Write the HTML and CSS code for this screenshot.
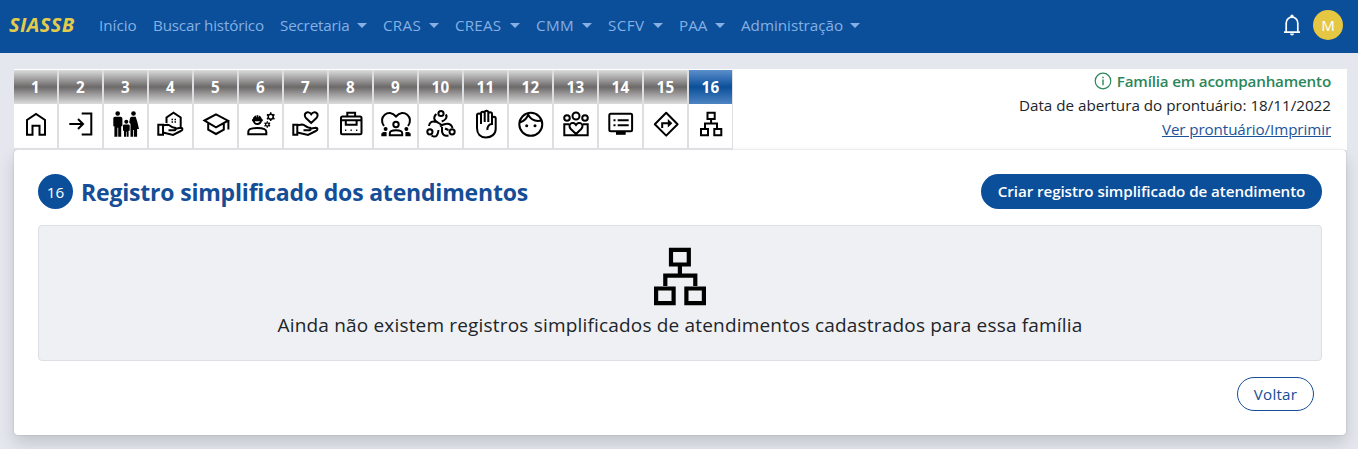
FILE: index.html
```html
<!DOCTYPE html>
<html lang="pt-BR">
<head>
<meta charset="utf-8">
<title>SIASSB</title>
<link rel="stylesheet" href="styles.css">
</head>
<body>
<header class="navbar">
  <a class="brand">SIASSB</a>
  <nav class="menu">
    <a class="item inicio"><span>Início</span></a>
    <a class="item buscar"><span>Buscar histórico</span></a>
    <a class="item secretaria"><span>Secretaria</span><i class="caret"></i></a>
    <a class="item cras"><span>CRAS</span><i class="caret"></i></a>
    <a class="item creas"><span>CREAS</span><i class="caret"></i></a>
    <a class="item cmm"><span>CMM</span><i class="caret"></i></a>
    <a class="item scfv"><span>SCFV</span><i class="caret"></i></a>
    <a class="item paa"><span>PAA</span><i class="caret"></i></a>
    <a class="item admin"><span>Administração</span><i class="caret"></i></a>
  </nav>
  <svg class="bell" viewBox="0 0 18 22"><path d="M1 18.200h16M3.200 18V9a5.800 5.800 0 0 1 11.600 0v9" fill="none" stroke="currentColor" stroke-width="1.700"/><path d="M9 .5a1.600 1.600 0 0 1 1.600 1.600v1.500H7.400V2.100A1.600 1.600 0 0 1 9 .5zM7 19.600h4a2 2 0 0 1-4 0z" fill="currentColor"/></svg>
  <span class="avatar">M</span>
</header>
<main class="page">
  <section class="top">
    <div class="tabs">
      <a class="tab"><b>1</b><svg viewBox="0 0 43 44"><path d="M13 30.700V16l9-6 9 6v14.700h-5.500v-9h-7v9z"/></svg></a>
      <a class="tab"><b>2</b><svg viewBox="0 0 43 44"><path d="M10.300 20h13.500M19 15l5 5-5 5M22.700 9.500h9.600v21h-9.600"/></svg></a>
      <a class="tab"><b>3</b><svg viewBox="0 0 43 44"><g class="solid"><circle cx="13.700" cy="9.500" r="2.300"/><path d="M10.800 12.700h5.800a1.800 1.800 0 0 1 1.800 1.800v7.800h-1.200v10.400h-3v-9h-.8v9h-3V22.300H9.300v-8a1.600 1.600 0 0 1 1.500-1.600z"/><circle cx="22.300" cy="17.700" r="2"/><path d="M20.300 20.400h4a1.400 1.400 0 0 1 1.400 1.400v5h-1.100v5.900h-2v-5h-.6v5h-2v-6h-1v-5a1.300 1.300 0 0 1 1.300-1.300z"/><circle cx="29.500" cy="9.500" r="2.300"/><path d="M27.700 12.700h4l1.600 5L35 25h-1.900v7.700H30V26h-.8v6.700h-2.700v-13l-1.300-1 .8-4.500a1.700 1.700 0 0 1 1.700-1.500z"/></g></svg></a>
      <a class="tab"><b>4</b><svg viewBox="0 0 43 44"><path d="M9.300 20.800h4.700v10H9.300zM14 21.300l4.500-.5c3 0 3.500 2.700 6 2.700 3 0 3 2.800 0 2.800h-5M25.500 25l6-1.200c2.500 0 2.500 2.500.3 3.200L24 31l-10-2.500M17.500 19v-5.500l7-4.800 7.200 4.800V23"/><path d="M22.500 15.500h1.500M25.500 15.500H27M22.500 18h1.500M25.500 18H27" stroke-width="1.500"/></svg></a>
      <a class="tab"><b>5</b><svg viewBox="0 0 43 44"><path d="M10.500 16.500L22 10.300l12 6.400-12 6.600zM14.200 19v6.700l7.800 4.300 7.800-4.300V19M34.400 17v8.500"/></svg></a>
      <a class="tab"><b>6</b><svg viewBox="0 0 43 44"><path d="M9.300 30.300v-2.500c0-5 18-5 18 0v2.500zM14.800 16.500a3.600 3.600 0 0 0 7.200 0"/><path class="solid" d="M13 17.200v-1.900h.7c.3-2.300 1.800-3.500 3.300-3.800v1.800h.5v-2h1.700v2h.5v-1.800c1.600.5 3 1.700 3.200 3.800h.9v1.900z"/><circle cx="31.700" cy="12.700" r="2.500" stroke-width="1.500"/><path d="M31.700 8.300v2M31.700 15v2M27.900 10.500l1.700 1M33.800 14l1.700 1M27.900 15l1.700-1M33.800 11.500l1.700-1" stroke-width="1.500"/><circle cx="28.300" cy="20.500" r="1.700" stroke-width="1.300"/><path d="M28.300 17.200v1.600M28.300 22.200v1.600M25.500 18.900l1.300.8M29.800 21.300l1.300.8M25.500 22.100l1.300-.8M29.800 19.700l1.300-.8" stroke-width="1.300"/></svg></a>
      <a class="tab"><b>7</b><svg viewBox="0 0 43 44"><path d="M9.300 20.800h4v10h-4zM13.500 21.300l4.500-.7c3 0 4 2.700 6.500 2.900 3 0 3 2.800 0 2.800h-5M26 24.800l5.500-1c2.500 0 2.500 2.500.3 3.200L24 31l-10.500-2.500M27.200 19l-5-4.700c-4.200-4.600 2-8.500 5-4 3-4.500 9.200-.6 5 4z"/></svg></a>
      <a class="tab"><b>8</b><svg viewBox="0 0 43 44"><rect x="12" y="12.500" width="20.500" height="17.800" rx="1.500"/><path d="M18.300 12V8.700h7.800V12M12 16.300h20M16.800 16.500v4.200h10.800v-4.200"/><path d="M16 26.300h1.300M21.500 26.300h1.300M27 26.300h1.300" stroke-width="1.400"/></svg></a>
      <a class="tab"><b>9</b><svg viewBox="0 0 43 44"><path d="M10 22C3.500 13.500 14.500 3.500 22 12.500c7.500-9 18.500 1 12 9.500"/><circle cx="22" cy="20.500" r="2.700"/><path d="M15.800 31.200v-2c0-3.800 12.400-3.800 12.400 0v2z"/><g class="solid"><circle cx="11.600" cy="25" r="2"/><circle cx="32.400" cy="25" r="2"/><path d="M7.300 32.300v-2.400c.5-1.700 2.500-2 5.300-1.700v4.100zM36.700 32.300v-2.400c-.5-1.700-2.500-2-5.300-1.700v4.100z"/></g></svg></a>
      <a class="tab"><b>10</b><svg viewBox="0 0 43 44"><circle cx="22" cy="9.500" r="2.600"/><circle cx="10.900" cy="27.800" r="2.600"/><circle cx="33.100" cy="27.800" r="2.600"/><path d="M17.300 10c-4 4-1.500 7 1.500 8.500l4 2.500M26.700 10.500c2.500 3-1 6-4 7M10 22c.3-4 4-5.500 7-3.800M12.500 31.500c5 3 6.500-1 7-5.500M21 22.500c4-3.500 11-4.500 12.500 1.500M29.500 31.500c-4 1-7-1-6.500-6.500v-2M26 24.500l3.500 1.500"/></svg></a>
      <a class="tab"><b>11</b><svg viewBox="0 0 43 44"><path d="M17 20V11.300c0-2.500-4-2.500-4 0V24c0 6 3.500 9.500 9 9.500s9.700-3.500 9.700-8.500V14.500c0-2.500-3.700-2.500-3.700 0V20c-3 0-5 3-4.500 6M17 19V9.500c0-2.500 3.700-2.500 3.700 0V18M20.700 18V8.500c0-2.500 3.600-2.500 3.600 0V18M24.300 10c0-2.500 3.700-2.500 3.700 0v9"/></svg></a>
      <a class="tab"><b>12</b><svg viewBox="0 0 43 44"><circle cx="21.800" cy="20.300" r="11.500"/><path d="M10.500 18.500c5-1.500 8-4.500 9-9.300M19 10.500c3 5.500 8 7.200 13.500 6"/><g class="solid"><circle cx="17.700" cy="21.800" r="1.500"/><circle cx="26" cy="21.800" r="1.500"/></g></svg></a>
      <a class="tab"><b>13</b><svg viewBox="0 0 43 44"><circle cx="13" cy="14" r="2.800"/><circle cx="22" cy="12" r="3.500"/><circle cx="31" cy="14" r="2.800"/><path d="M15 20.300h-4.700v11h23.400v-11H29M22 30l-5.200-5c-4-4.700 2.200-8.700 5.200-4 3-4.700 9.200-.7 5.200 4z"/></svg></a>
      <a class="tab"><b>14</b><svg viewBox="0 0 43 44"><rect x="10.300" y="9.700" width="22.800" height="17.600" rx="1.500"/><path d="M14.500 16.300h2M18.700 16.300h11M14.500 21.300h2M18.700 21.300h11"/><path class="solid" d="M17 27.500h9.700v3.300H17z"/></svg></a>
      <a class="tab"><b>15</b><svg viewBox="0 0 43 44"><path d="M22.200 8.800L33.600 20.200 22.200 31.600 10.800 20.200z" stroke-linejoin="round"/><path d="M18.200 24v-4.800h6.500"/><path class="solid" d="M23.800 15l4.500 4.200-4.500 4.200z"/></svg></a>
      <a class="tab active"><b>16</b><svg viewBox="0 0 43 44"><path d="M18.500 8.700h7.200v6.200h-7.200zM22.100 15v4.500M16 24.500v-5h12v5M12 25h7v6.300h-7zM25.300 25h7v6.300h-7z"/></svg></a>
    </div>
    <div class="status">
      <div class="follow"><svg viewBox="0 0 18 18"><circle cx="9" cy="9" r="7.800" fill="none" stroke="currentColor" stroke-width="1.200"/><path d="M8.300 4.800h1.400v1.500H8.300zM8.300 7.500h1.400v5.800H8.300z" fill="currentColor"/></svg><strong>Família em acompanhamento</strong></div>
      <div class="opened">Data de abertura do prontuário: 18/11/2022</div>
      <a class="print">Ver prontuário/Imprimir</a>
    </div>
  </section>
  <section class="card">
    <div class="heading">
      <span class="number">16</span>
      <h1>Registro simplificado dos atendimentos</h1>
      <button class="create"><span>Criar registro simplificado de atendimento</span></button>
    </div>
    <div class="empty">
      <svg viewBox="0 0 54 60"><path d="M18 2.800h17.800v14.700H18zM26.900 17.500v11M12.300 39V28.700h30V39M3.100 41.500h17.500v14.700H3.100zM33.400 41.500h17.500v14.700H33.400z" fill="none" stroke="#000" stroke-width="4.200"/></svg>
      <p>Ainda não existem registros simplificados de atendimentos cadastrados para essa família</p>
    </div>
    <div class="actions"><button class="back">Voltar</button></div>
  </section>
</main>
</body>
</html>
```
FILE: styles.css
```css
* { box-sizing: border-box; }
body {
  margin: 0;
  height: 449px;
  overflow: hidden;
  background: #e4e8ee;
  color: #212529;
  font: 15.2px/24px "Open Sans", "Noto Sans", sans-serif;
  white-space: nowrap;
}
button { font-family: inherit; white-space: nowrap; }
.navbar {
  display: flex;
  align-items: center;
  height: 53px;
  padding: 0 15px 3px 9px;
  background: #0b4f9a;
}
.brand {
  width: 82px;
  color: #e3cb4b;
  font-size: 20px;
  font-weight: 700;
  font-style: italic;
  letter-spacing: 0.4px;
}
.menu { display: flex; flex: 1; color: #86b0e3; }
.item { display: flex; align-items: center; justify-content: space-between; padding: 0 8px; }
.inicio { width: 54px; }
.buscar { width: 127px; letter-spacing: -0.17px; }
.secretaria { width: 103px; letter-spacing: -0.17px; }
.cras { width: 72px; letter-spacing: 0.3px; }
.creas { width: 81px; letter-spacing: 0.2px; }
.cmm { width: 72px; letter-spacing: 0.4px; }
.scfv { width: 71px; letter-spacing: 0.4px; }
.paa { width: 62px; }
.admin { width: 135px; }
.caret {
  border: 5px solid transparent;
  border-top-color: currentColor;
  border-bottom: 0;
}
.bell { width: 18px; height: 22px; margin-right: 12px; color: #fff; }
.avatar {
  width: 30px;
  height: 30px;
  border-radius: 50%;
  background: #e5c742;
  color: #fff;
  line-height: 31px;
  text-align: center;
}
.page { padding: 16px 12px 0 14px; }
.top {
  display: flex;
  justify-content: space-between;
  height: 81px;
  padding-right: 16px;
  width: 1333px;
  background: #fff;
}
.tabs { display: flex; padding-top: 1px; }
.tab {
  display: block;
  width: 45px;
  height: 80px;
  border-right: 2px solid #dedfe2;
  border-bottom: 2px solid #dedfe2;
}
.tab:last-child { width: 44px; border-right-width: 1px; }
.tab b {
  display: block;
  height: 34px;
  background: linear-gradient(#dcdcdc, #6c6969 50%, #dcdcdc);
  color: #fff;
  line-height: 35px;
  letter-spacing: 0.2px;
  text-align: center;
}
.tab.active b { background: linear-gradient(#5c8fcb, #0b4f9a 50%, #4d84c2); }
.tab svg {
  display: block;
  width: 43px;
  height: 44px;
  fill: none;
  stroke: #000;
  stroke-width: 2;
}
.tab svg .solid { fill: #000; stroke: none; }
.status { display: flex; flex-direction: column; align-items: flex-end; }
.follow { display: flex; align-items: center; gap: 5px; color: #2b8659; }
.follow svg { width: 18px; height: 18px; }
.follow strong { font-weight: 600; letter-spacing: -0.18px; }
.print { color: #1d539b; text-decoration: underline; letter-spacing: -0.1px; }
.card {
  width: 1332px;
  height: 285px;
  padding: 24px;
  border-radius: 4px;
  background: #fff;
  box-shadow: 0 8px 16px rgba(0, 0, 0, 0.15), 0 0 2px rgba(0, 0, 0, 0.2);
}
.heading { display: flex; align-items: center; height: 35px; }
.number {
  width: 35px;
  height: 35px;
  margin-right: 8px;
  border-radius: 50%;
  background: #0b4f9a;
  color: #fff;
  line-height: 36px;
  text-align: center;
}
h1 {
  flex: 1;
  margin: 0;
  padding-top: 2px;
  color: #154d96;
  font-size: 23px;
  line-height: 35px;
  font-weight: 700;
  letter-spacing: -0.19px;
}
.create {
  width: 341px;
  height: 35px;
  padding: 0 0 1px;
  border: 0;
  border-radius: 18px;
  background: #0b4f9a;
  color: #fff;
  font-size: 15.2px;
  font-weight: 600;
  letter-spacing: -0.08px;
}
.empty {
  display: flex;
  flex-direction: column;
  align-items: center;
  height: 136px;
  margin-top: 16px;
  padding-top: 21px;
  border: 1px solid #dcdfe3;
  border-radius: 4px;
  background: #eff0f3;
}
.empty svg { width: 54px; height: 60px; }
.empty p { margin: 2px 0 0; font-size: 19px; line-height: 32px; font-weight: 500; letter-spacing: 0.18px; }
.actions { display: flex; justify-content: flex-end; padding: 16px 8px 0 0; }
.back {
  width: 77px;
  height: 34px;
  padding: 0;
  border: 1px solid #154d96;
  border-radius: 17px;
  background: #fff;
  color: #154d96;
  font-size: 15.2px;
  font-weight: 500;
  letter-spacing: 0.2px;
}
```
